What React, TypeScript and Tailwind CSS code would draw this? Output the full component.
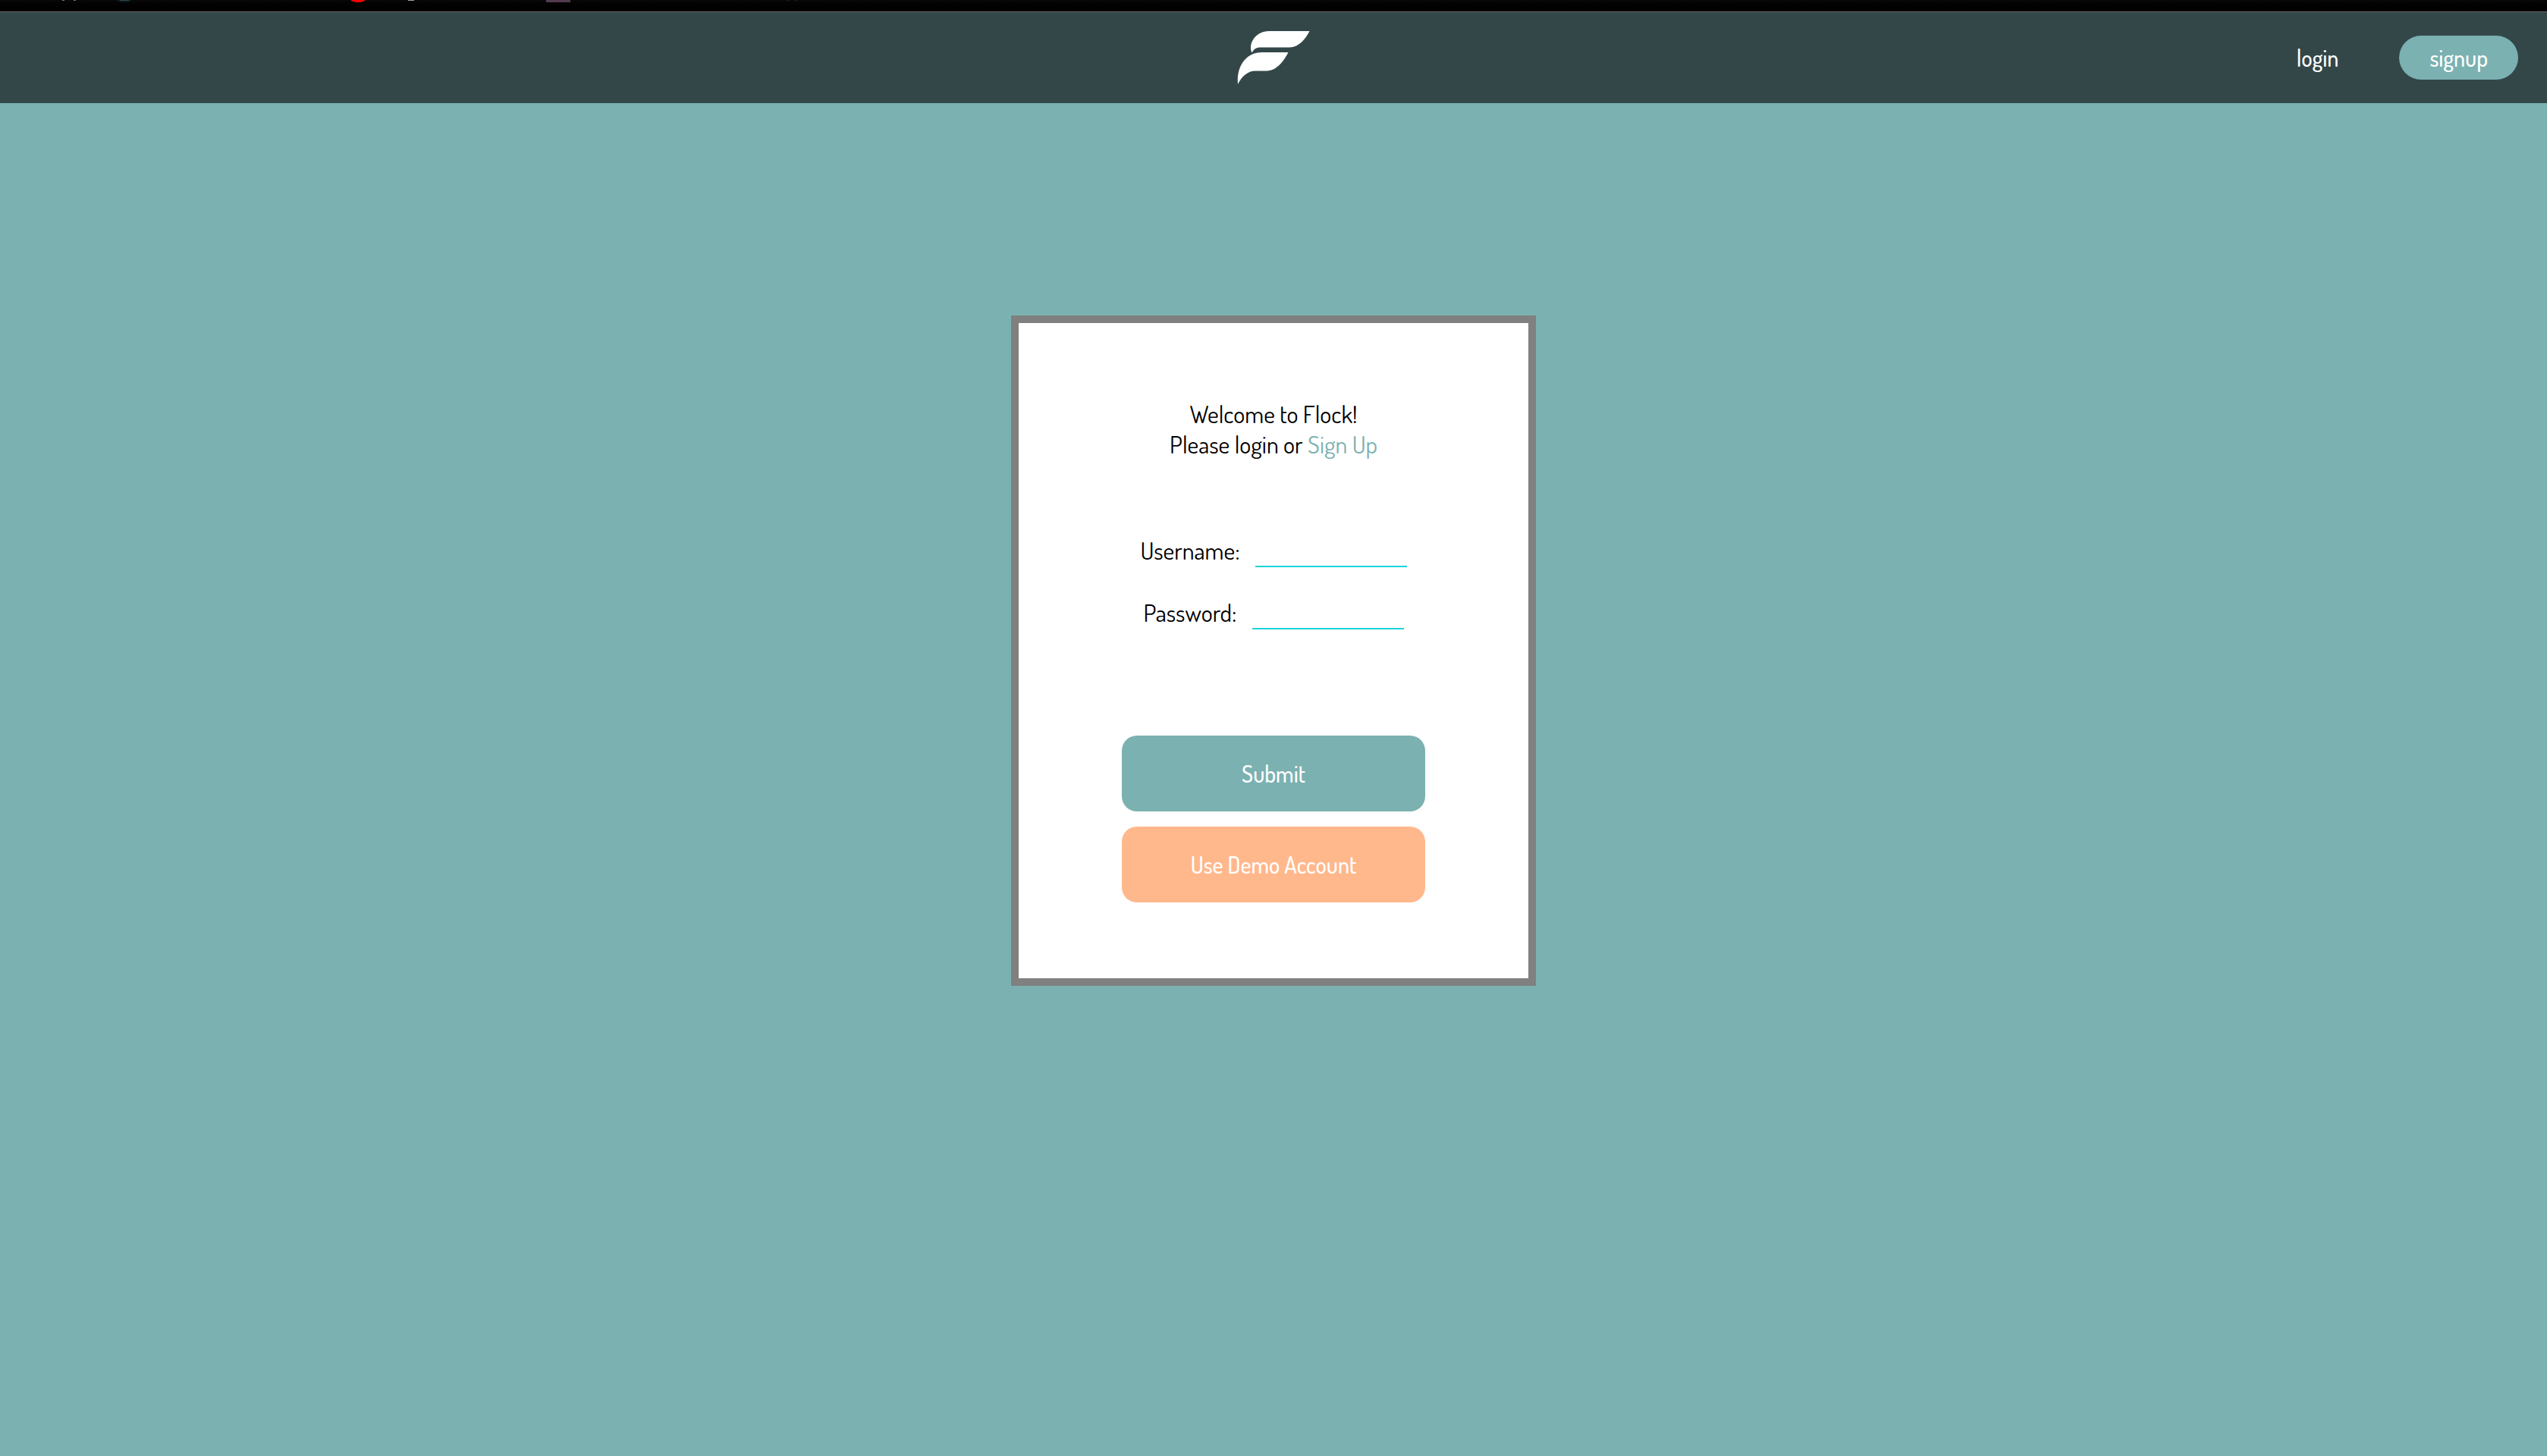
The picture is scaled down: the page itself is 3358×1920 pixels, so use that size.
import React from "react";

const field =
  "h-12 w-[200px] border-b-2 border-[#1cd3d9] bg-transparent px-1 outline-none";

function TabStrip() {
  return (
    <div className="h-4 border-b border-[#6b6266] bg-linear-to-b from-[#080808] to-black">
      <svg width="1100" height="4" viewBox="0 0 1100 4" className="block" aria-hidden="true">
        <rect x="82" y="0" width="3" height="1" fill="#77776f" />
        <rect x="97" y="0" width="3" height="1" fill="#77777a" />
        <ellipse cx="164" cy="0" rx="10" ry="3" fill="#071a2a" />
        <rect x="158" y="0" width="12" height="1" fill="#3d4433" />
        <ellipse cx="472" cy="-1" rx="10" ry="4" fill="#ff0000" />
        <rect x="538" y="0" width="8" height="1" fill="#9aa5ab" />
        <rect x="720" y="0" width="32" height="3" fill="#533c4f" />
        <path d="M1035 0h5v2zM1048 0h5l-5 2z" fill="#1a1a1a" />
      </svg>
    </div>
  );
}

function Logo() {
  return (
    <svg width="96" height="72" viewBox="0 0 96 72" fill="#fff" aria-hidden="true">
      <path d="M42 1H95.500C91 10 82 22.500 69 22.500H31C25 22.500 22 25 19.500 29.500C14 17 25 1 42 1Z" />
      <path d="M33 29H67.500C63 38 53 53.500 39 53.500H24C14 53.500 6 61 1 71C-1 47 12 29 33 29Z" />
    </svg>
  );
}

export default function App() {
  return (
    <div className="flex min-h-screen flex-col bg-[#7bb1b1] font-['Dosis','Liberation_Sans_Narrow','Lato',sans-serif] text-[32px] leading-10 text-black">
      <TabStrip />
      <header className="grid h-[120px] grid-cols-[1fr_auto_1fr] items-center bg-[#334749] px-[38px] text-white">
        <span />
        <a href="#home" aria-label="Flock home">
          <Logo />
        </a>
        <nav className="flex items-center justify-end gap-20 text-[30px] font-medium">
          <a href="#login">login</a>
          <a href="#signup" className="flex h-[58px] items-center rounded-full bg-[#7bb1b1] px-10">
            signup
          </a>
        </nav>
      </header>
      <main className="flex justify-center pt-[280px]">
        <form
          className="flex flex-col items-center border-10 border-[#808080] bg-white px-[136px] py-[100px]"
          onSubmit={(e) => e.preventDefault()}
        >
          <p className="text-center">
            Welcome to Flock!
            <br />
            Please login or{" "}
            <a href="#signup" className="text-[#7bb1b1]">
              Sign Up
            </a>
          </p>
          <div className="mt-[94px] flex items-end gap-5">
            <label htmlFor="username" className="pb-0.5">Username:</label>
            <input id="username" type="text" className={field} />
          </div>
          <div className="mt-[34px] flex items-end gap-5">
            <label htmlFor="password" className="pb-0.5">Password:</label>
            <input id="password" type="password" className={field} />
          </div>
          <div className="mt-[140px] flex w-[400px] flex-col gap-5 text-[30px] font-medium text-white">
            <button type="submit" className="h-[100px] rounded-[20px] bg-[#7bb1b1]">
              Submit
            </button>
            <button type="button" className="h-[100px] rounded-[20px] bg-[#ffb88c]">
              Use Demo Account
            </button>
          </div>
        </form>
      </main>
    </div>
  );
}
